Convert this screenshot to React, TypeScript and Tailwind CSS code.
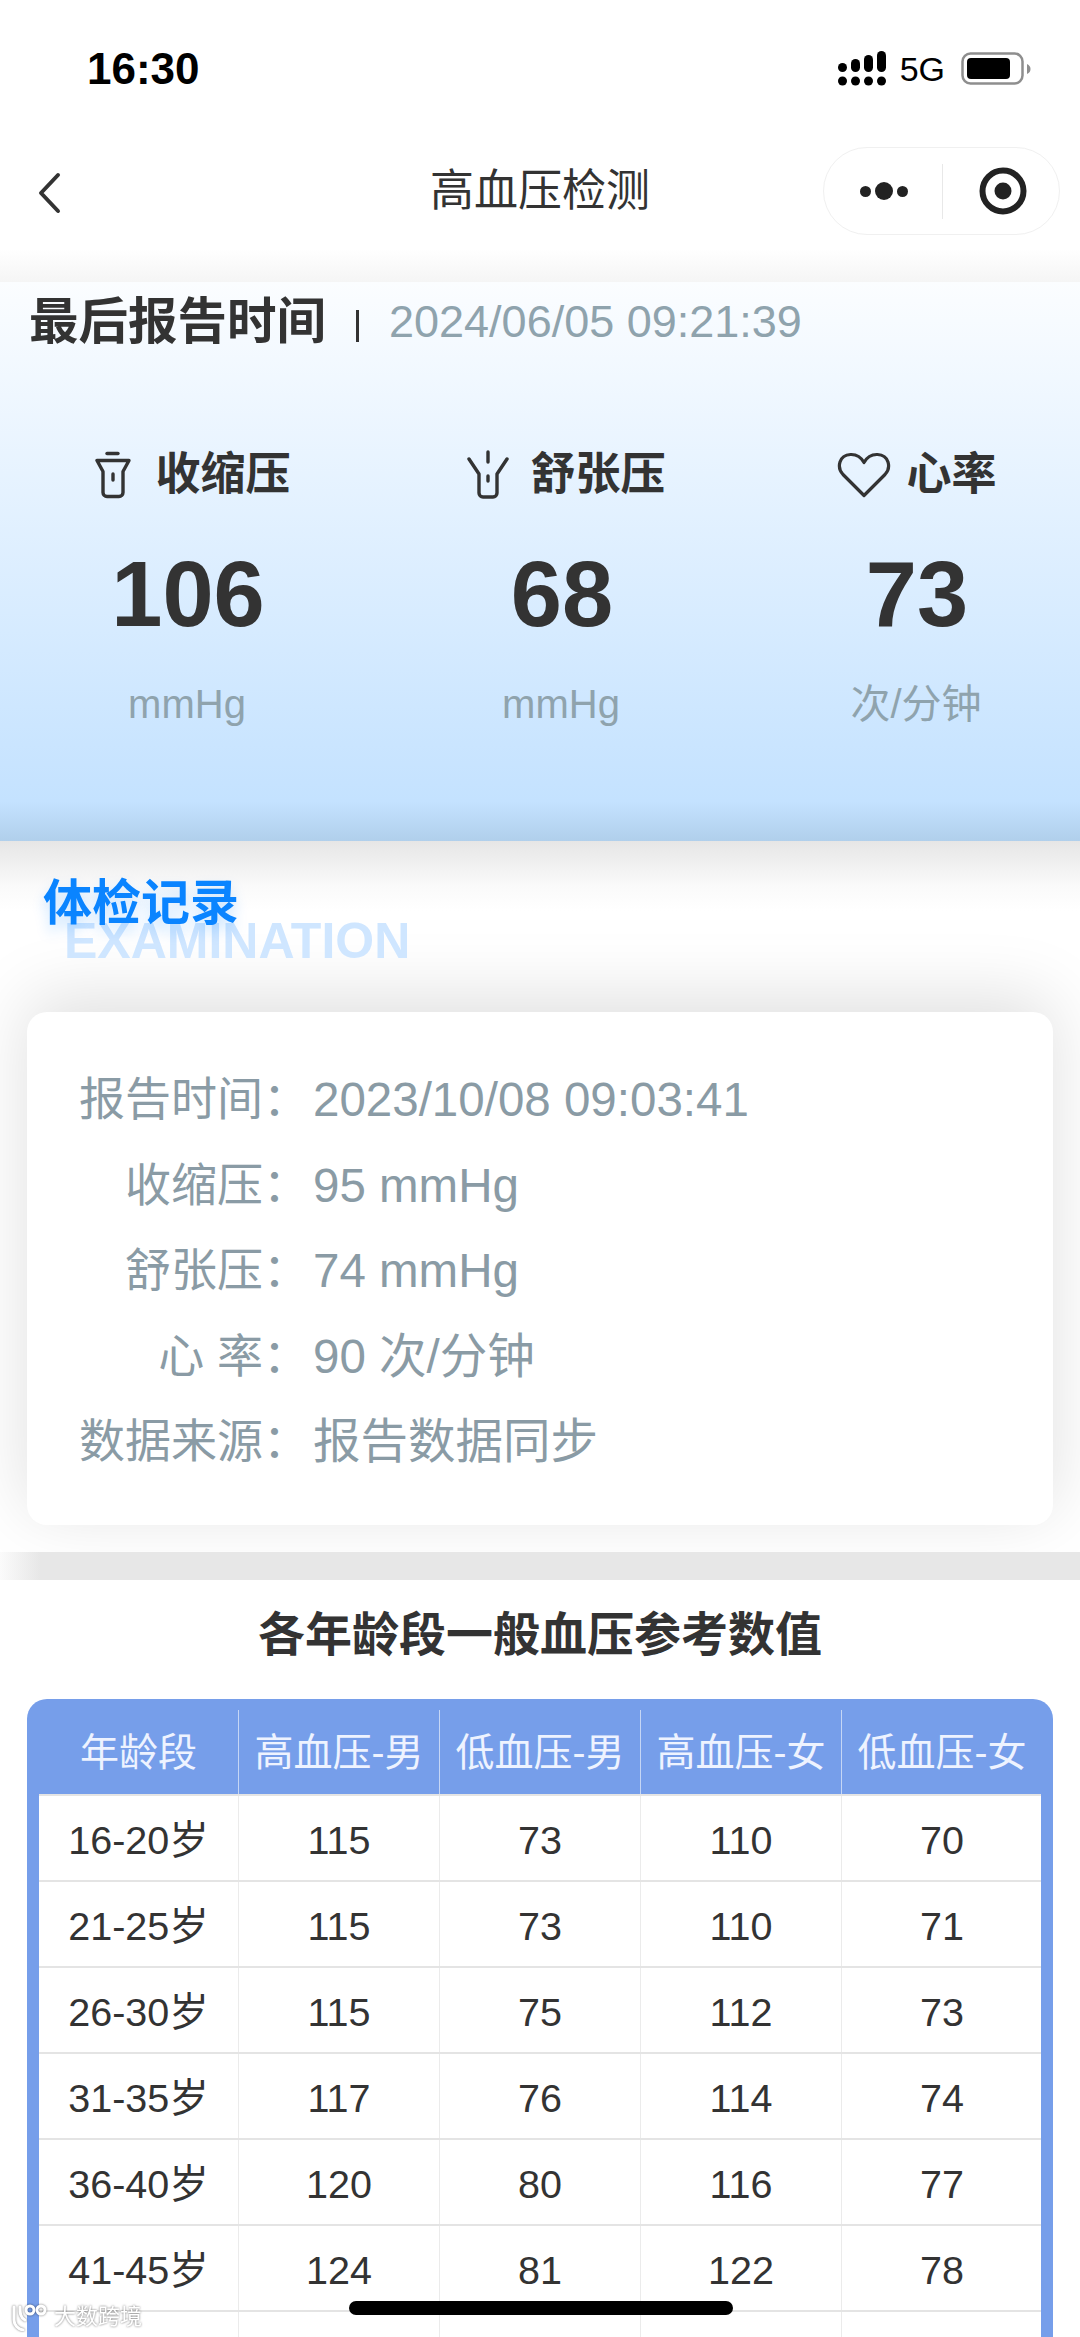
const sans = "font-['Liberation_Sans','Noto_Sans_CJK_SC',sans-serif]";

const rows = [
  ["16-20岁", "115", "73", "110", "70"],
  ["21-25岁", "115", "73", "110", "71"],
  ["26-30岁", "115", "75", "112", "73"],
  ["31-35岁", "117", "76", "114", "74"],
  ["36-40岁", "120", "80", "116", "77"],
  ["41-45岁", "124", "81", "122", "78"],
  ["\u00a0", "", "", "", ""],
];

const head = ["年龄段", "高血压-男", "低血压-男", "高血压-女", "低血压-女"];

const record: [string, string][] = [
  ["报告时间：", "2023/10/08 09:03:41"],
  ["收缩压：", "95 mmHg"],
  ["舒张压：", "74 mmHg"],
  ["心 率：", "90 次/分钟"],
  ["数据来源：", "报告数据同步"],
];

function Signal() {
  return (
    <svg width="50" height="36" viewBox="0 0 50 36" fill="#000">
      <rect x="0" y="12" width="9" height="9" rx="4.5" />
      <rect x="13" y="8" width="9" height="13" rx="4.5" />
      <rect x="26" y="4" width="9" height="17" rx="4.5" />
      <rect x="39" y="0" width="9" height="21" rx="4.5" />
      <circle cx="4.5" cy="30" r="4.5" />
      <circle cx="17.5" cy="30" r="4.5" />
      <circle cx="30.5" cy="30" r="4.5" />
      <circle cx="43.5" cy="30" r="4.5" />
    </svg>
  );
}

function Battery() {
  return (
    <svg width="70" height="34" viewBox="0 0 70 34">
      <rect x="1.5" y="1.5" width="60" height="30" rx="8" fill="none" stroke="#8e8e8e" strokeWidth="2.5" />
      <rect x="6" y="6" width="43" height="21" rx="4" fill="#000" />
      <path d="M66 12c2.500 1 3.500 3 3.500 5s-1 4-3.500 5z" fill="#8e8e8e" />
    </svg>
  );
}

function TorchA() {
  return (
    <svg width="36" height="48" viewBox="0 0 36 48" fill="none" stroke="#333" strokeWidth="3.4" strokeLinecap="round" strokeLinejoin="round">
      <path d="M12 2.500h11" />
      <path d="M2 9.500h32l-6 11v21a4 4 0 0 1-4 4H12a4 4 0 0 1-4-4v-21z" />
      <path d="M18 23v6" />
    </svg>
  );
}

function TorchB() {
  return (
    <svg width="42" height="50" viewBox="0 0 42 50" fill="none" stroke="#333" strokeWidth="3.4" strokeLinecap="round" strokeLinejoin="round">
      <path d="M21 2v10" />
      <path d="M2 9l10 15v19a4 4 0 0 0 4 4h10a4 4 0 0 0 4-4V24L40 9" />
      <path d="M21 26v5" />
    </svg>
  );
}

function Heart() {
  return (
    <svg width="54" height="46" viewBox="0 0 54 46" fill="none" stroke="#333" strokeWidth="3.2" strokeLinejoin="round" strokeLinecap="round">
      <path d="M27 43.500 6 22.500C-.5 15.500 2 3 13.500 2.500 20 2.200 24.500 6 27 10.500 29.500 6 34 2.200 40.500 2.500 52 3 54.500 15.500 48 22.500z" />
    </svg>
  );
}

function Stat({ icon, label, value, unit, gap }: { icon: React.ReactNode; label: string; value: string; unit: string; gap: string }) {
  return (
    <div className="flex flex-col items-center">
      <div className={`flex h-[54px] items-center ${gap}`}>
        {icon}
        <span className="text-[45px] font-semibold leading-[54px] text-[#333]">{label}</span>
      </div>
      <div className="mt-[40px] text-[92px] font-bold leading-[104px] text-[#333]">{value}</div>
      <div className="mt-[33px] -translate-x-[1px] text-[40px] leading-[50px] text-[#8fa3ad]">{unit}</div>
    </div>
  );
}

export default function App() {
  return (
    <div className={`relative h-[2337px] w-[1080px] overflow-hidden bg-white ${sans}`}>
      {/* status bar */}
      <div className="flex h-[132px] items-start justify-between pl-[87px] pr-[49px] pt-[44px]">
        <span className="text-[44px] font-bold leading-[50px] text-black">16:30</span>
        <div className="flex items-center pt-[7px]">
          <Signal />
          <span className="ml-[12px] text-[34px] leading-[36px] text-black">5G</span>
          <span className="ml-[16px] flex"><Battery /></span>
        </div>
      </div>

      {/* nav bar */}
      <div className="relative flex h-[150px] items-start justify-center bg-[linear-gradient(180deg,#ffffff_0%,#ffffff_78%,#f5f5f5_100%)] pt-[31px]">
        <svg className="absolute left-[37px] top-[40px]" width="24" height="42" viewBox="0 0 24 42" fill="none" stroke="#333" strokeWidth="4" strokeLinecap="round" strokeLinejoin="round">
          <path d="M21 3 4 21l17 18" />
        </svg>
        <span className="text-[44px] leading-[56px] text-[#333]">高血压检测</span>
        <div className="absolute left-[823px] top-[15px] flex h-[88px] w-[237px] items-center rounded-full border border-[#f0f0f0] bg-white">
          <div className="flex w-[118px] items-center justify-center gap-[4px] pl-[2px]">
            <span className="h-[11px] w-[11px] rounded-full bg-[#222]" />
            <span className="h-[18px] w-[18px] rounded-full bg-[#222]" />
            <span className="h-[11px] w-[11px] rounded-full bg-[#222]" />
          </div>
          <div className="h-[55px] w-[1px] bg-[#e8e8e8]" />
          <div className="flex flex-1 items-center justify-center pl-[3px]">
            <svg width="48" height="48" viewBox="0 0 48 48">
              <circle cx="24" cy="24" r="20.500" fill="none" stroke="#222" strokeWidth="6" />
              <circle cx="24" cy="24" r="8.500" fill="#222" />
            </svg>
          </div>
        </div>
      </div>

      {/* hero */}
      <div className="relative z-10 h-[559px] bg-[linear-gradient(180deg,#fbfdff_0%,#c4e2ff_93%,#b0cfeb_100%)]">
        <div className="flex h-[66px] items-center pl-[29px] pt-[14px]">
          <span className="text-[49.500px] font-semibold leading-[60px] text-[#333]">最后报告时间</span>
          <span className="ml-[30px] h-[32px] w-[3px] translate-y-[4px] bg-[#333]" />
          <span className="ml-[30px] text-[45px] leading-[56px] text-[#8fa3ad]">2024/06/05 09:21:39</span>
        </div>
        <div className="mt-[100px] grid grid-cols-[376px_372px_338px]">
          <Stat icon={<div className="ml-[10px]"><TorchA /></div>} label="收缩压" value="106" unit="mmHg" gap="gap-[24px]" />
          <Stat icon={<div className="ml-[9px]"><TorchB /></div>} label="舒张压" value="68" unit="mmHg" gap="gap-[21px]" />
          <Stat icon={<Heart />} label="心率" value="73" unit="次/分钟" gap="gap-[15px]" />
        </div>
      </div>

      {/* examination record */}
      <div className="h-[711px] bg-[linear-gradient(180deg,#e6e6e6_0,#fafafa_45px,#ffffff_70px)] px-[27px] pt-[32px]">
        <div className="relative h-[139px] pl-[16px]">
          <span className="absolute left-[37px] top-[39px] text-[50px] font-bold leading-[58px] text-[#cfe6ff]">EXAMINATION</span>
          <span className="relative text-[49px] font-semibold leading-[60px] text-[#0a84ff] [text-shadow:0_8px_14px_rgba(10,132,255,0.22)]">体检记录</span>
        </div>
        <div className="flex h-[513px] flex-col rounded-[20px] bg-white pt-[45px] shadow-[0_-14px_70px_rgba(0,0,0,0.13)]">
          {record.map(([k, v]) => (
            <div key={k} className="flex h-[85.500px] items-center text-[#8a9ba5]">
              <span className="w-[282px] text-right text-[46px]">{k}</span>
              <span className="ml-[4px] text-[47.500px]">{v}</span>
            </div>
          ))}
        </div>
      </div>

      {/* divider */}
      <div className="h-[28px] bg-[linear-gradient(90deg,#fbfbfb_0,#e7e7e7_40px,#e7e7e7_100%)]" />

      {/* reference table */}
      <div className="bg-white px-[27px]">
        <div className="flex h-[119px] items-center justify-center pb-[10px] text-[47px] font-semibold leading-[60px] text-[#333]">
          各年龄段一般血压参考数值
        </div>
        <div className="rounded-t-[20px] bg-[#769eea] px-[12px] pt-[11px]">
          <div className="grid h-[84px] grid-cols-[200px_201px_201px_201px_200px]">
            {head.map((h, i) => (
              <div key={h} className={`flex items-center justify-center pt-[3px] text-[39px] text-[#eef3ff] ${i < 4 ? "border-r border-[#c5d6f5]" : ""}`}>
                {h}
              </div>
            ))}
          </div>
          <div className="bg-white">
            {rows.map((r, i) => (
              <div key={i} className="grid h-[86px] grid-cols-[200px_201px_201px_201px_200px] border-t-[2px] border-[#e4e4e4]">
                {r.map((c, j) => (
                  <div key={j} className={`flex items-center justify-center pt-[5px] text-[39.500px] text-[#333] ${j < 4 ? "border-r border-[#ebebeb]" : ""}`}>
                    {c}
                  </div>
                ))}
              </div>
            ))}
          </div>
        </div>
      </div>

      {/* home indicator */}
      <div className="absolute left-[349px] top-[2301px] h-[14px] w-[384px] rounded-full bg-black" />

      {/* watermark */}
      <div className="absolute left-[10px] top-[2303px] flex items-center gap-[6px] text-white [filter:drop-shadow(0_0_1px_rgba(0,0,0,0.55))]">
        <svg width="38" height="28" viewBox="0 0 38 28" fill="none" stroke="#fff" strokeWidth="3" strokeLinecap="round">
          <path d="M4 4v13c0 5 4 9 9 10" />
          <path d="M10 4c0 6 0 10 5 13" />
          <circle cx="20" cy="7" r="4" />
          <circle cx="31" cy="7" r="4" />
        </svg>
        <span className="text-[22px] leading-[28px]">大数跨境</span>
      </div>
    </div>
  );
}
